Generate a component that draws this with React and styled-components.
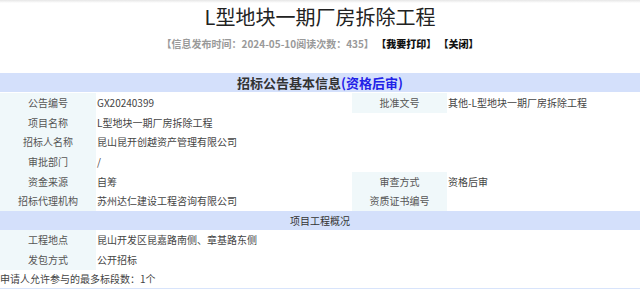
import styled, { createGlobalStyle } from 'styled-components';

const GlobalStyle = createGlobalStyle`
    body {
        margin: 0;
        background: #fff;
        font-family: "Noto Sans CJK SC", "Noto Sans", sans-serif;
    }
`;

const Page = styled.div`
    width: 640px;
    height: 291px;
    overflow: hidden;
`;

const TopShade = styled.div`
    height: 3px;
    background: linear-gradient(#e6e6e6, #fff);
`;

const Title = styled.h1`
    margin: 0;
    height: 28px;
    line-height: 28px;
    text-align: center;
    font-size: 20px;
    font-weight: normal;
    color: #222;
`;

const Meta = styled.div`
    margin: 6px 0 22px;
    line-height: 14px;
    text-align: center;
    font-size: 10px;
    font-weight: bold;
    color: #999;
    b {
        color: #111;
    }
`;

const Band = styled.div`
    height: 19px;
    line-height: 19px;
    background: #d4e0fb;
    text-align: center;
    color: #333;
    font-size: ${p => (p.$main ? '13px' : '10px')};
    font-weight: ${p => (p.$main ? 'bold' : 'normal')};
    margin-bottom: ${p => (p.$main ? '1px' : '0')};
    span {
        color: #1f22e8;
    }
`;

const Row = styled.div`
    display: grid;
    grid-template-columns: 96px 256px 95px 1fr;
    height: 19.7px;
    font-size: 10px;
    line-height: 19.7px;
    color: #444;
`;

const Label = styled.div`
    background: #f0f8fa;
    text-align: center;
    color: #555;
`;

const Value = styled.div`
    padding-left: 1px;
    white-space: nowrap;
    grid-column: ${p => (p.$wide ? 'span 3' : 'auto')};
`;

const Note = styled.div`
    font-size: 10px;
    line-height: 18px;
    color: #444;
    border-bottom: 1px solid #d8e4fb;
`;

const rows = [
    ['公告编号', 'GX20240399', '批准文号', '其他-L型地块一期厂房拆除工程'],
    ['项目名称', 'L型地块一期厂房拆除工程'],
    ['招标人名称', '昆山昆开创越资产管理有限公司'],
    ['审批部门', '/'],
    ['资金来源', '自筹', '审查方式', '资格后审'],
    ['招标代理机构', '苏州达仁建设工程咨询有限公司', '资质证书编号', ''],
];

const projectRows = [
    ['工程地点', '昆山开发区昆嘉路南侧、章基路东侧'],
    ['发包方式', '公开招标'],
];

const InfoRow = ({ cells }) => (
    <Row>
        <Label>{cells[0]}</Label>
        {cells.length > 2 ? (
            <>
                <Value>{cells[1]}</Value>
                <Label>{cells[2]}</Label>
                <Value>{cells[3]}</Value>
            </>
        ) : (
            <Value $wide>{cells[1]}</Value>
        )}
    </Row>
);

const App = () => (
    <Page>
        <GlobalStyle />
        <TopShade />
        <Title>L型地块一期厂房拆除工程</Title>
        <Meta>
            【信息发布时间：2024-05-10阅读次数：435】 <b>【我要打印】</b> <b>【关闭】</b>
        </Meta>
        <Band $main>招标公告基本信息<span>(资格后审)</span></Band>
        {rows.map(r => <InfoRow key={r[0]} cells={r} />)}
        <Band>项目工程概况</Band>
        {projectRows.map(r => <InfoRow key={r[0]} cells={r} />)}
        <Note>申请人允许参与的最多标段数：1个</Note>
    </Page>
);

export default App;
